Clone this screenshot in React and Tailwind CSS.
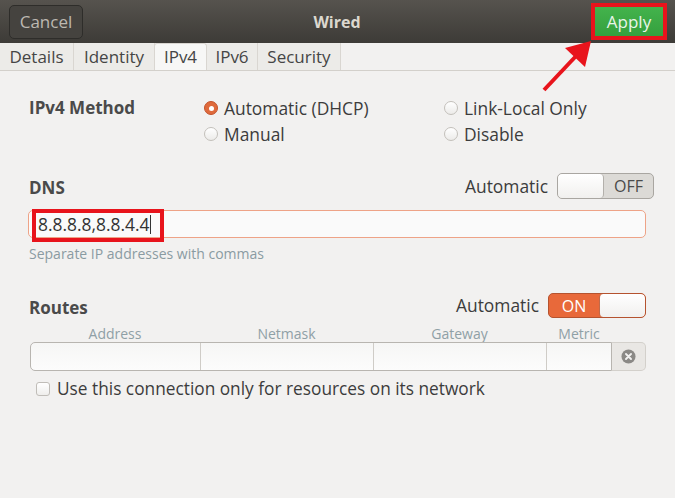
import React from 'react';

const tabs = [
  { label: 'Details', w: 'w-[74px]' },
  { label: 'Identity', w: 'w-[81px]' },
  { label: 'IPv4', w: 'w-[53px]', active: true },
  { label: 'IPv6', w: 'w-[51px]' },
  { label: 'Security', w: 'w-[83px]' },
];

function Radio({ checked, label }) {
  return (
    <div className="flex items-center gap-[6px] h-[26px]">
      {checked ? (
        <span className="w-[14px] h-[14px] rounded-full bg-[#df6a3c] border border-[#c4532b] flex items-center justify-center">
          <span className="w-[5px] h-[5px] rounded-full bg-white" />
        </span>
      ) : (
        <span className="w-[14px] h-[14px] rounded-full bg-gradient-to-b from-[#ffffff] to-[#ecebe9] border border-[#c3c0bb]" />
      )}
      <span className="text-[17.4px] text-[#3c3c3c]">{label}</span>
    </div>
  );
}

function Switch({ on }) {
  if (on) {
    return (
      <div className="w-[98px] h-[25px] rounded-[5px] border border-[#b5532f] bg-[#e8693a] flex overflow-hidden">
        <span className="w-[50px] flex items-center justify-center text-white text-[16px]">ON</span>
        <span className="flex-1 bg-gradient-to-b from-[#ffffff] to-[#f1f0ee] rounded-[4px] border-l border-[#c06a4a]" />
      </div>
    );
  }
  return (
    <div className="w-[97px] h-[26px] rounded-[5px] border border-[#a9a6a1] bg-[#dcdad6] flex overflow-hidden">
      <span className="w-[46px] bg-gradient-to-b from-[#ffffff] to-[#f1f0ee] rounded-[4px] border-r border-[#b3b0ab]" />
      <span className="flex-1 flex items-center justify-center text-[16px] text-[#4a4a4a]">OFF</span>
    </div>
  );
}

export default function App() {
  return (
    <div className="w-[675px] h-[498px] bg-[#f2f1f0] overflow-hidden relative font-['Open_Sans',sans-serif]">
      {/* Title bar */}
      <header className="h-[43px] flex items-center justify-between pl-[9px] pr-[8px] bg-gradient-to-b from-[#56534e] to-[#3d3b37]">
        <button className="w-[74px] h-[34px] rounded-[5px] border border-[#2e2d2a] bg-[#45433f] text-[#bdb9b1] text-[17px]">
          Cancel
        </button>
        <span className="text-[16px] font-bold text-[#dcd8cf]">Wired</span>
        <div className="w-[76px] h-[37px] border-[4px] border-[#e8141c] flex">
          <button className="flex-1 bg-gradient-to-b from-[#43b34c] to-[#35a03e] text-[#e9f5e9] text-[17px] leading-none">
            Apply
          </button>
        </div>
      </header>

      {/* Tabs */}
      <div className="h-[28px] flex items-end border-b border-[#d3d0cb] bg-[#f2f1f0]">
        {tabs.map((t) => (
          <div
            key={t.label}
            className={`${t.w} h-[27px] flex items-center justify-center text-[17px] text-[#454545] border-r border-[#d9d6d1] ${
              t.active ? 'bg-[#f7f7f6] border-l border-t rounded-t-[3px] -ml-px' : 'bg-[#ecebe8]'
            }`}
          >
            {t.label}
          </div>
        ))}
      </div>

      {/* Content */}
      <div className="px-[29px]">
        {/* IPv4 method */}
        <div className="flex mt-[24px]">
          <div className="w-[175px] h-[26px] flex items-center text-[17px] font-bold text-[#4a4a4a]">IPv4 Method</div>
          <div className="w-[240px] flex flex-col">
            <Radio checked label="Automatic (DHCP)" />
            <Radio label="Manual" />
          </div>
          <div className="flex flex-col">
            <Radio label="Link-Local Only" />
            <Radio label="Disable" />
          </div>
        </div>

        {/* DNS */}
        <div className="h-[26px] flex items-center justify-between mt-[26px] -mr-[8px]">
          <span className="text-[17px] font-bold text-[#4a4a4a] translate-y-[2px]">DNS</span>
          <div className="flex items-center gap-[9px]">
            <span className="text-[17.4px] text-[#3c3c3c]">Automatic</span>
            <Switch />
          </div>
        </div>
        <div className="relative mt-[11px] -ml-px h-[28px] rounded-[5px] border border-[#eea387] bg-[#fafafa] flex items-center pl-[9px]">
          <span className="text-[17.4px] text-[#333333]">8.8.8.8,8.8.4.4</span>
          <span className="w-px h-[19px] bg-[#333333] ml-px" />
          <div className="absolute left-[3px] top-[-2px] w-[132px] h-[33px] border-[4px] border-[#e8141c]" />
        </div>
        <div className="mt-[7px] h-[16px] flex items-center text-[14px] text-[#8a9ba2]">
          Separate IP addresses with commas
        </div>

        {/* Routes */}
        <div className="h-[25px] flex items-center justify-between mt-[32px]">
          <span className="text-[17px] font-bold text-[#4a4a4a] translate-y-[2px]">Routes</span>
          <div className="flex items-center gap-[9px]">
            <span className="text-[17.4px] text-[#3c3c3c]">Automatic</span>
            <Switch on />
          </div>
        </div>
        <div className="flex mt-[7px] ml-px h-[16px] items-center text-[14px] text-[#8fa0a6]">
          <span className="w-[170px] text-center">Address</span>
          <span className="w-[173px] text-center">Netmask</span>
          <span className="w-[173px] text-center">Gateway</span>
          <span className="w-[66px] text-center">Metric</span>
        </div>
        <div className="flex mt-[1px] ml-px h-[29px]">
          <div className="flex-1 flex rounded-l-[5px] border border-[#b8b5b0] bg-gradient-to-b from-[#f6f6f5] to-[#fcfcfc] overflow-hidden">
            <span className="w-[170px] border-r border-[#cfccc7]" />
            <span className="w-[173px] border-r border-[#cfccc7]" />
            <span className="w-[173px] border-r border-[#cfccc7]" />
            <span className="flex-1" />
          </div>
          <button className="w-[34px] h-[29px] rounded-r-[5px] border border-l-0 border-[#d3d0cb] bg-[#e9e7e4] flex items-center justify-center">
            <svg width="15" height="15" viewBox="0 0 16 16">
              <circle cx="8" cy="8" r="7.5" fill="#8b8986" />
              <path d="M5.3 5.3 L10.7 10.7 M10.7 5.3 L5.3 10.7" stroke="#f2f1f0" strokeWidth="2" strokeLinecap="round" />
            </svg>
          </button>
        </div>

        {/* Checkbox */}
        <div className="flex items-center gap-[7px] mt-[7px] ml-[7px] h-[22px]">
          <span className="w-[14px] h-[14px] rounded-[3px] border border-[#c0bdb8] bg-gradient-to-b from-[#ffffff] to-[#efeeec]" />
          <span className="text-[17.3px] text-[#3c3c3c]">Use this connection only for resources on its network</span>
        </div>
      </div>

      {/* Annotation arrow */}
      <svg className="absolute left-0 top-0 pointer-events-none" width="675" height="498">
        <line x1="544" y1="90" x2="577" y2="55" stroke="#e8141c" strokeWidth="4" />
        <polygon points="591,41 565,48 585,67" fill="#e8141c" />
      </svg>
    </div>
  );
}
